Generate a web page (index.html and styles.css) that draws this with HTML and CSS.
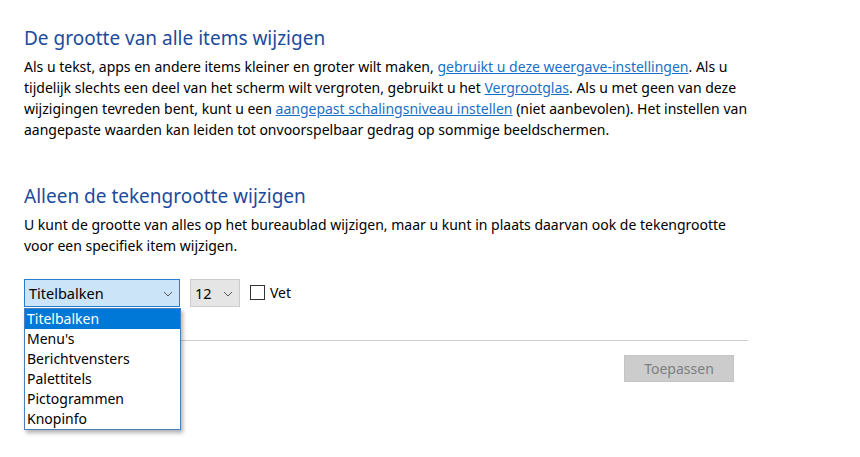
FILE: index.html
```html
<!DOCTYPE html>
<html lang="nl">
<head>
  <meta charset="UTF-8">
  <title>Weergave</title>
  <link rel="stylesheet" href="styles.css">
</head>
<body>
  <div class="page">
    <h2>De grootte van alle items wijzigen</h2>
    <p>Als u tekst, apps en andere items kleiner en groter wilt maken, <a href="#">gebruikt u deze weergave-instellingen</a>. Als u<br>
    tijdelijk slechts een deel van het scherm wilt vergroten, gebruikt u het <a href="#">Vergrootglas</a>. Als u met geen van deze<br>
    wijzigingen tevreden bent, kunt u een <a href="#">aangepast schalingsniveau instellen</a> (niet aanbevolen). Het instellen van<br>
    aangepaste waarden kan leiden tot onvoorspelbaar gedrag op sommige beeldschermen.</p>

    <h2 class="second">Alleen de tekengrootte wijzigen</h2>
    <p>U kunt de grootte van alles op het bureaublad wijzigen, maar u kunt in plaats daarvan ook de tekengrootte<br>
    voor een specifiek item wijzigen.</p>

    <div class="controls">
      <div class="combo-wrap">
        <div class="combo open">
          <span>Titelbalken</span>
          <svg class="chev" width="10" height="6" viewBox="0 0 10 6"><path d="M1 1 L5 5 L9 1" fill="none" stroke="#5a5a5a" stroke-width="1"/></svg>
        </div>
        <ul class="dropdown">
          <li class="selected">Titelbalken</li>
          <li>Menu's</li>
          <li>Berichtvensters</li>
          <li>Palettitels</li>
          <li>Pictogrammen</li>
          <li>Knopinfo</li>
        </ul>
      </div>
      <div class="combo size">
        <span>12</span>
        <svg class="chev" width="10" height="6" viewBox="0 0 10 6"><path d="M1 1 L5 5 L9 1" fill="none" stroke="#5a5a5a" stroke-width="1"/></svg>
      </div>
      <label class="check"><span class="box"></span>Vet</label>
    </div>

    <div class="divider"></div>

    <div class="actions">
      <button class="apply" disabled>Toepassen</button>
    </div>
  </div>
</body>
</html>
```

FILE: styles.css
```css
html, body {
  height: 100%;
}
body {
  font-family: "Noto Sans", "Open Sans", sans-serif;
  background: #ffffff;
  color: #000000;
  margin: 0;
  font-size: 14px;
  min-height: 457px;
}
.page {
  padding: 24px 0 0 24px;
  width: 724px;
}
h2 {
  font-weight: 400;
  font-size: 19px;
  color: #1c4b9b;
  margin: 0 0 4px 0;
  line-height: 28px;
}
h2.second {
  margin-top: 42px;
}
p {
  margin: 0;
  line-height: 21px;
  white-space: nowrap;
}
a {
  color: #1a6fc7;
  text-decoration: underline;
}
.controls {
  display: flex;
  align-items: center;
  margin-top: 23px;
  height: 28px;
}
.combo-wrap {
  position: relative;
}
.combo {
  display: flex;
  align-items: center;
  justify-content: space-between;
  box-sizing: border-box;
  height: 28px;
  padding: 0 6px 0 4px;
  border: 1px solid #cccccc;
  background: #e5e5e5;
  font-size: 14.5px;
}
.combo.open {
  width: 156px;
  background: #cce4f7;
  border-color: #2b7bd0;
}
.combo.size {
  width: 50px;
  margin-left: 10px;
}
.chev {
  margin-top: 1px;
}
.dropdown {
  position: absolute;
  top: 29px;
  left: 0;
  width: 157px;
  box-sizing: border-box;
  margin: 0;
  padding: 0;
  list-style: none;
  background: #ffffff;
  border: 1px solid #4a7fb9;
  box-shadow: 2px 3px 4px rgba(0, 0, 0, 0.3);
  z-index: 2;
}
.dropdown li {
  height: 20px;
  line-height: 20px;
  padding-left: 2px;
}
.dropdown li.selected {
  background: #0078d7;
  color: #ffffff;
}
.check {
  display: flex;
  align-items: center;
  margin-left: 10px;
  margin-top: -2px;
}
.box {
  width: 13px;
  height: 13px;
  border: 1px solid #333333;
  margin-right: 5px;
  background: #ffffff;
}
.divider {
  margin-top: 33px;
  height: 1px;
  background: #cccccc;
}
.actions {
  display: flex;
  justify-content: flex-end;
  padding-right: 14px;
  margin-top: 14px;
}
.apply {
  width: 110px;
  height: 27px;
  font-family: inherit;
  font-size: 14px;
  color: #7f7f7f;
  background: #cccccc;
  border: 1px solid #c4c4c4;
}
```
